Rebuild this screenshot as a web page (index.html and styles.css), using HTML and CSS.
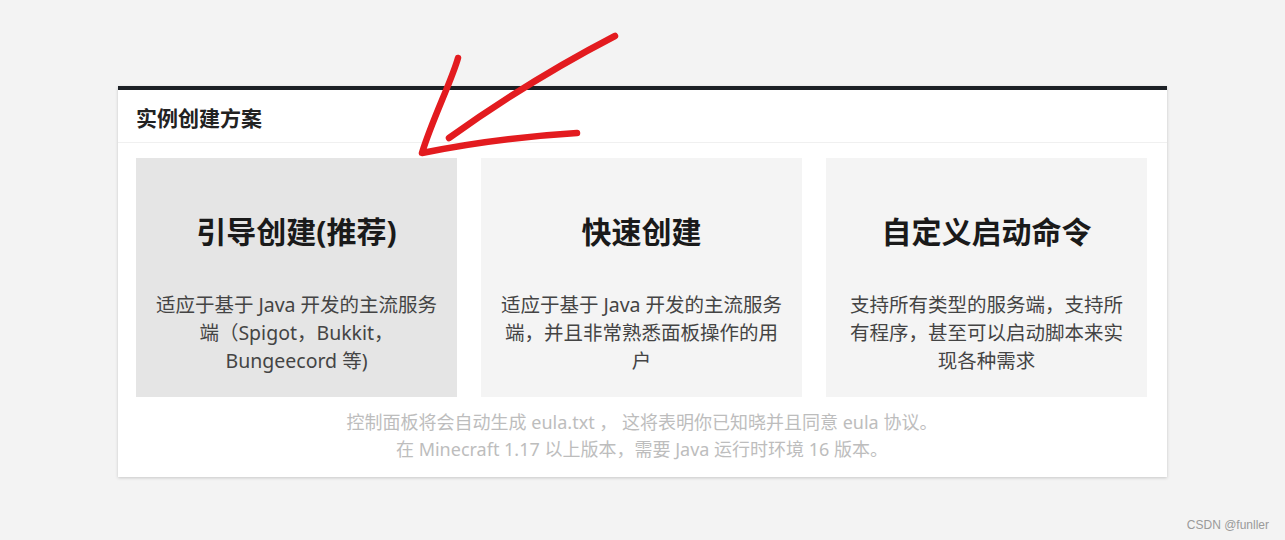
FILE: index.html
```html
<!DOCTYPE html>
<html lang="zh-CN">
<head>
    <meta charset="UTF-8">
    <meta name="viewport" content="width=device-width, initial-scale=1.0">
    <title>实例创建方案</title>
    <link rel="stylesheet" href="styles.css">
</head>
<body>

<div class="card">
    <div class="card-header">实例创建方案</div>
    <div class="card-body">
        <div class="options">
            <div class="option active">
                <div class="option-title">引导创建(推荐)</div>
                <div class="option-desc">适应于基于 Java 开发的主流服务端（Spigot，Bukkit，Bungeecord 等)</div>
            </div>
            <div class="option">
                <div class="option-title">快速创建</div>
                <div class="option-desc">适应于基于 Java 开发的主流服务端，并且非常熟悉面板操作的用户</div>
            </div>
            <div class="option">
                <div class="option-title">自定义启动命令</div>
                <div class="option-desc">支持所有类型的服务端，支持所有程序，甚至可以启动脚本来实现各种需求</div>
            </div>
        </div>
        <p class="note">
            控制面板将会自动生成 eula.txt ， 这将表明你已知晓并且同意 eula 协议。<br>
            在 Minecraft 1.17 以上版本，需要 Java 运行时环境 16 版本。
        </p>
    </div>
</div>

<!-- hand drawn arrow on top of the screenshot -->
<svg class="scribble" width="1285" height="540" viewBox="0 0 1285 540">
    <path d="M458 58 C452 80 432 120 422 153 Q495 138 577 133" />
    <path d="M615 36 Q530 80 449 138" />
</svg>

<div class="watermark">CSDN @funller</div>

</body>
</html>
```

FILE: styles.css
```css
body {
    margin: 0;
    padding: 86px 0 0 118px;
    background-color: #f3f3f3;
    font-family: "Noto Sans", "Noto Sans CJK SC", sans-serif;
    height: 540px;
    box-sizing: border-box;
    overflow: hidden;
}
.card {
    width: 1049px;
    background-color: #fff;
    border-top: 4px solid #1c2025;
    box-shadow: 0 1px 3px rgba(0, 0, 0, 0.18);
    box-sizing: border-box;
}
.card-header {
    height: 53px;
    line-height: 50px;
    padding: 3px 18px 0;
    font-size: 21px;
    font-weight: bold;
    color: #222;
    border-bottom: 1px solid #f0f0f0;
    box-sizing: border-box;
}
.card-body {
    padding: 15px 19px 14px 18px;
}
.options {
    display: grid;
    grid-template-columns: repeat(3, 321px);
    gap: 24px;
}
.option {
    height: 239px;
    padding: 53px 18px 0;
    box-sizing: border-box;
    background-color: #f4f4f4;
    text-align: center;
    cursor: pointer;
}
.option.active {
    background-color: #e5e5e5;
}
.option-title {
    font-size: 30px;
    line-height: 42px;
    font-weight: bold;
    color: #1a1a1a;
    margin-bottom: 38px;
}
.option-desc {
    font-size: 19.5px;
    line-height: 28px;
    color: #444;
}
.note {
    margin: 12px 0 0;
    font-size: 18px;
    line-height: 27px;
    color: #bdbdbd;
    text-align: center;
}
.scribble {
    position: absolute;
    left: 0;
    top: 0;
    pointer-events: none;
}
.scribble path {
    fill: none;
    stroke: #e31b1f;
    stroke-width: 6.5;
    stroke-linecap: round;
    stroke-linejoin: round;
}
.watermark {
    position: absolute;
    right: 16px;
    bottom: 8px;
    font-family: "Liberation Sans", Arial, sans-serif;
    font-size: 12px;
    color: #9a9a9a;
}
```
